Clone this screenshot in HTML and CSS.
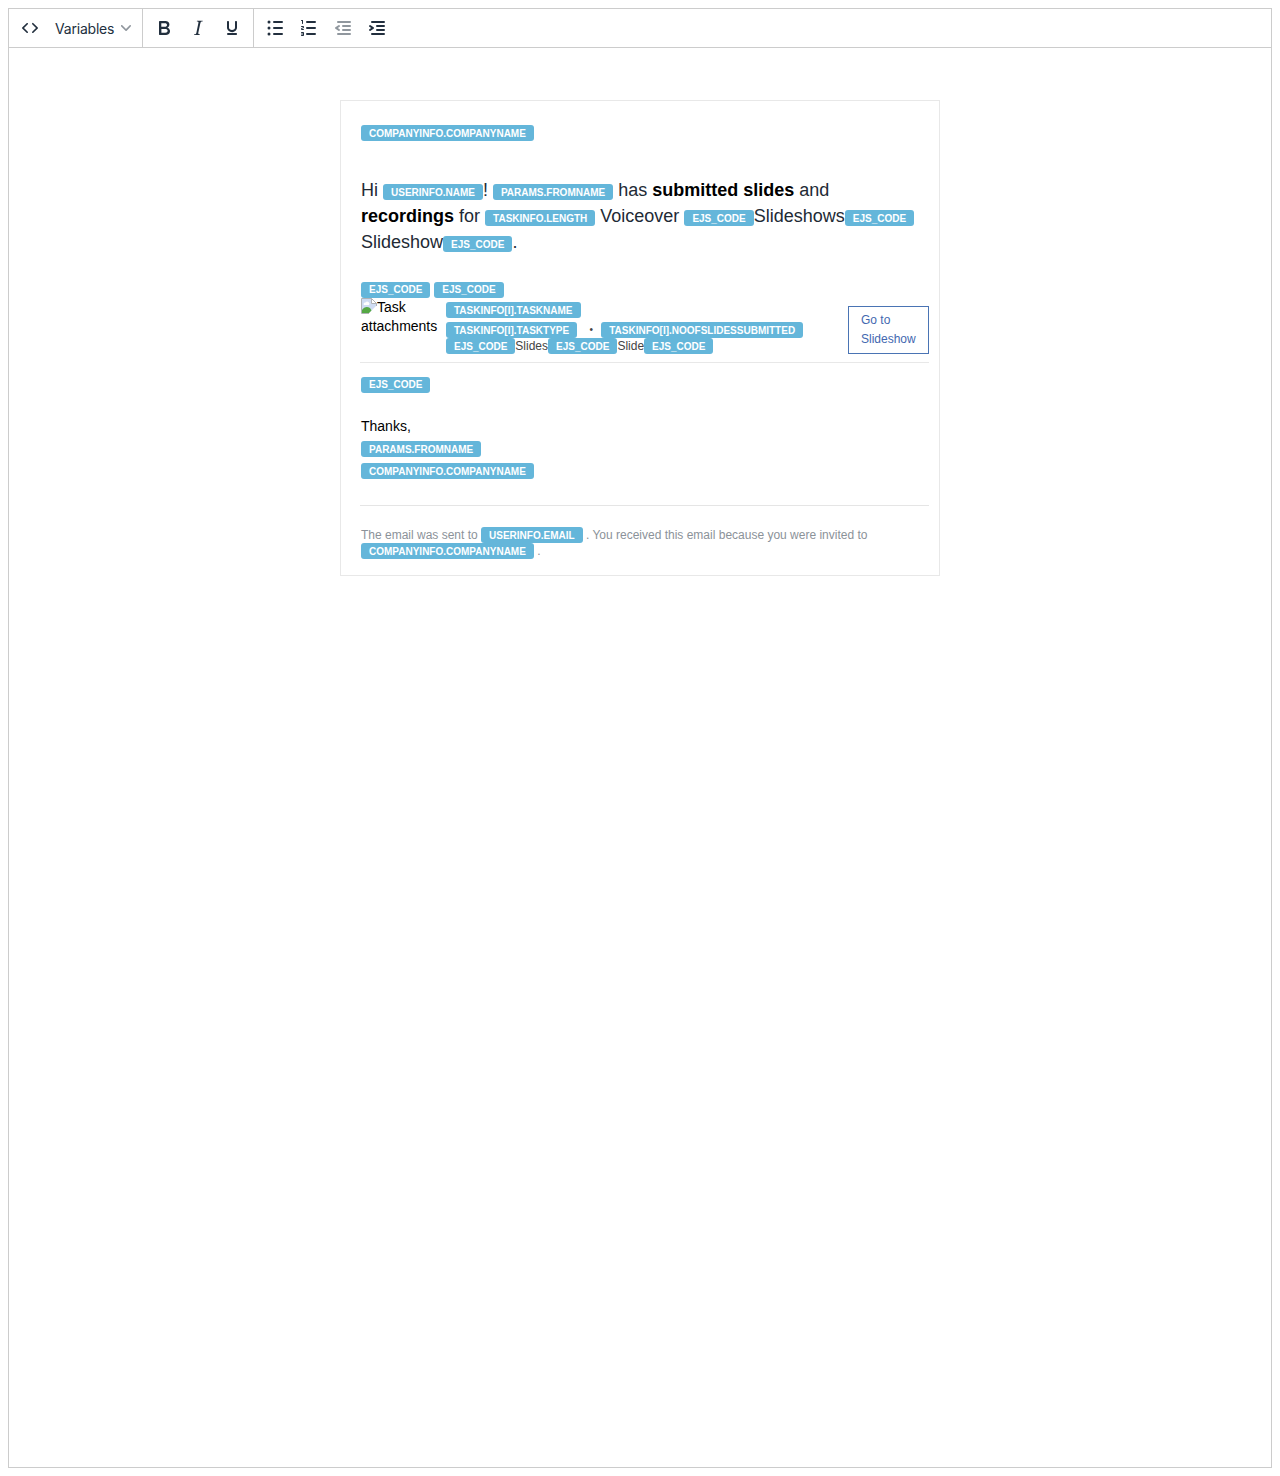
FILE: index.html
```html
<!DOCTYPE html>
<html lang="en">
<head>
<meta charset="utf-8">
<title>Email template editor</title>
<link rel="stylesheet" href="styles.css">
</head>
<body>
<div class="editor">
  <div class="toolbar">
    <div class="group">
      <button class="tool" aria-label="Source code"><svg width="24" height="24"><path d="M9.8 15.7c.3.3.3.8 0 1-.3.4-.9.4-1.2 0l-4.4-4.1a.8.8 0 0 1 0-1.2l4.4-4.2c.3-.3.9-.3 1.2 0 .3.3.3.8 0 1.1L6 12l3.8 3.7ZM14.2 15.7c-.3.3-.3.8 0 1 .4.4.9.4 1.2 0l4.4-4.1c.3-.3.3-.9 0-1.2l-4.4-4.2a.8.8 0 0 0-1.2 0c-.3.3-.3.8 0 1.1L18 12l-3.8 3.7Z"/></svg></button>
      <button class="select"><span class="select-label">Variables</span><svg class="chevron" width="10" height="10"><path d="M8.7 2.2c.3-.3.8-.3 1 0 .4.4.4.9 0 1.2L5.7 7.8c-.3.3-.9.3-1.2 0L.2 3.4a.8.8 0 0 1 0-1.2c.3-.3.8-.3 1.1 0L5 6l3.7-3.8Z"/></svg></button>
    </div>
    <div class="group">
      <button class="tool" aria-label="Bold"><svg width="24" height="24"><path d="M7.8 19c-.3 0-.5 0-.6-.2l-.2-.5V5.7c0-.2 0-.4.2-.5l.6-.2h5c1.5 0 2.7.3 3.5 1 .7.6 1.1 1.4 1.1 2.5a3 3 0 0 1-.6 1.9c-.4.6-1 1-1.6 1.2.4.1.9.3 1.3.6s.8.7 1 1.2c.4.4.5 1 .5 1.6 0 1.3-.4 2.3-1.3 3-.8.7-2.1 1-3.8 1H7.8Zm5-8.3c.6 0 1.2-.1 1.6-.5.4-.3.6-.7.6-1.3 0-1.1-.8-1.7-2.3-1.7H9.3v3.500h3.400Zm.5 6c.7 0 1.3-.1 1.7-.4.4-.4.6-.9.6-1.500s-.2-1-.7-1.400c-.4-.3-1-.4-2-.4H9.400v3.800h4Z" fill-rule="evenodd"/></svg></button>
      <button class="tool" aria-label="Italic"><svg width="24" height="24"><path d="m16.7 4.7-.1.9h-.3c-.6 0-1 0-1.4.3-.3.3-.4.6-.5 1.1l-2.1 9.8v.6c0 .5.4.8 1.4.8h.2l-.2.8H8l.2-.8h.2c1.1 0 1.8-.5 2-1.5l2-9.8.1-.5c0-.6-.4-.8-1.4-.8h-.3l.2-.9h5.7Z"/></svg></button>
      <button class="tool" aria-label="Underline"><svg width="24" height="24"><path d="M16 5c.6 0 1 .4 1 1v5.5a4 4 0 0 1-.4 1.8l-1 1.4a5.3 5.3 0 0 1-5.5 1 5 5 0 0 1-1.6-1c-.5-.4-.8-.9-1.1-1.4a4 4 0 0 1-.4-1.8V6c0-.6.4-1 1-1s1 .4 1 1v5.5c0 .3 0 .6.2 1l.6.7a3.3 3.3 0 0 0 2.2.8 3.4 3.4 0 0 0 2.2-.8c.3-.2.4-.5.6-.8l.2-.9V6c0-.6.4-1 1-1ZM8 17h8c.6 0 1 .4 1 1s-.4 1-1 1H8a1 1 0 0 1 0-2Z"/></svg></button>
    </div>
    <div class="group last">
      <button class="tool" aria-label="Bullet list"><svg width="24" height="24"><path d="M11 5h8a1 1 0 0 1 0 2h-8a1 1 0 0 1 0-2Zm0 6h8a1 1 0 0 1 0 2h-8a1 1 0 0 1 0-2Zm0 6h8a1 1 0 0 1 0 2h-8a1 1 0 0 1 0-2Z"/><circle cx="6" cy="6" r="1.5"/><circle cx="6" cy="12" r="1.5"/><circle cx="6" cy="18" r="1.5"/></svg></button>
      <button class="tool" aria-label="Numbered list"><svg width="24" height="24"><path d="M10 17h8a1 1 0 0 1 0 2h-8a1 1 0 0 1 0-2Zm0-6h8a1 1 0 0 1 0 2h-8a1 1 0 0 1 0-2Zm0-6h8a1 1 0 0 1 0 2h-8a1 1 0 1 1 0-2ZM6 4v3.5c0 .3-.2.5-.5.5a.5.5 0 0 1-.5-.5V5h-.5a.5.5 0 0 1 0-1H6Zm-1 8.8.2.2h1.3c.3 0 .5.2.5.5s-.2.5-.5.5H4.9a1 1 0 0 1-.9-1V13c0-.4.3-.8.6-1l1.2-.4.2-.3a.2.2 0 0 0-.2-.2H4.5a.5.5 0 0 1-.5-.5c0-.3.2-.5.5-.5h1.6c.5 0 .9.4.9 1v.1c0 .4-.3.8-.6 1l-1.2.4-.2.3ZM7 17v2c0 .6-.4 1-1 1H4.5a.5.5 0 0 1 0-1h1.2c.2 0 .3-.1.3-.3 0-.2-.1-.3-.3-.3H4.4a.4.4 0 1 1 0-.8h1.3c.2 0 .3-.1.3-.3 0-.2-.1-.3-.3-.3H4.5a.5.5 0 1 1 0-1H6c.6 0 1 .4 1 1Z"/></svg></button>
      <button class="tool disabled" aria-label="Decrease indent"><svg width="24" height="24"><path d="M7 5h12a1 1 0 0 1 0 2H7a1 1 0 1 1 0-2Zm5 4h7a1 1 0 0 1 0 2h-7a1 1 0 0 1 0-2Zm0 4h7a1 1 0 0 1 0 2h-7a1 1 0 0 1 0-2Zm-5 4h12a1 1 0 0 1 0 2H7a1 1 0 0 1 0-2Zm1.600-3.800a1 1 0 0 1-1.200 1.600l-3-2a1 1 0 0 1 0-1.600l3-2a1 1 0 0 1 1.200 1.600L6.800 12l1.800 1.200Z"/></svg></button>
      <button class="tool" aria-label="Increase indent"><svg width="24" height="24"><path d="M7 5h12a1 1 0 0 1 0 2H7a1 1 0 1 1 0-2Zm5 4h7a1 1 0 0 1 0 2h-7a1 1 0 0 1 0-2Zm0 4h7a1 1 0 0 1 0 2h-7a1 1 0 0 1 0-2Zm-5 4h12a1 1 0 0 1 0 2H7a1 1 0 0 1 0-2Zm-2.600-3.800L6.200 12l-1.800-1.200a1 1 0 0 1 1.200-1.600l3 2a1 1 0 0 1 0 1.600l-3 2a1 1 0 1 1-1.200-1.600Z"/></svg></button>
    </div>
  </div>
  <div class="canvas">
    <div class="email">
      <div class="brand"><span class="tag">CompanyInfo.companyName</span></div>
      <div class="message">
        <div>Hi <span class="tag">userInfo.name</span>! <span class="tag">params.fromName</span> has <b>submitted slides</b> and</div>
        <div><b>recordings</b> for <span class="tag">taskInfo.length</span> Voiceover <span class="tag">ejs_code</span>Slideshows<span class="tag">ejs_code</span></div>
        <div>Slideshow<span class="tag">ejs_code</span>.</div>
      </div>
      <div class="codes"><span class="tag">ejs_code</span><span class="tag">ejs_code</span></div>
      <div class="task">
        <div class="thumb"><svg class="broken" width="16" height="16" viewBox="0 0 16 16"><path d="M1 1h9.500l4.500 4.500V8l-7 7H1Z" fill="#cfdcf3"/><path d="M3 7a1.500 1.500 0 0 1 1.500-2.500 2 2 0 0 1 3.500 2.500Z" fill="#fff"/><path d="M1 15v-3c2-3 5-4 8-2l1.500 2.500L8 15Z" fill="#55a844"/><path d="M8 15.500H.5V.5h10l5 5V8" fill="none" stroke="#b0b3b7"/><path d="M10.500.5v5h5Z" fill="#fff" stroke="#b0b3b7"/></svg>Task<br>attachments</div>
        <div class="details">
          <div class="name"><span class="tag">taskInfo[i].taskName</span></div>
          <div class="row"><span class="tag">taskInfo[i].taskType</span><span class="dot">•</span><span class="tag">taskInfo[i].noOfSlidesSubmitted</span></div>
          <div class="row"><span class="tag">ejs_code</span>Slides<span class="tag">ejs_code</span>Slide<span class="tag">ejs_code</span></div>
        </div>
        <a class="go">Go to<br>Slideshow</a>
      </div>
      <div class="after"><span class="tag">ejs_code</span></div>
      <div class="thanks">Thanks,</div>
      <div class="signature"><span class="tag">params.fromName</span><span class="tag">companyInfo.companyName</span></div>
      <div class="footer">
        <div class="row">The email was sent to&nbsp;<span class="tag">userInfo.email</span>&nbsp;. You received this email because you were invited to</div>
        <div class="row"><span class="tag">companyInfo.companyName</span>&nbsp;.</div>
      </div>
    </div>
  </div>
</div>
</body>
</html>
```
FILE: styles.css
```css
* { box-sizing: border-box; }
body {
  margin: 0;
  padding: 8px;
  background: #fff;
  font-family: "Liberation Sans", Arial, sans-serif;
  font-size: 14px;
  color: #000;
}
.editor {
  display: flex;
  flex-direction: column;
  height: 1460px;
  border: 1px solid #ccc;
}
.toolbar {
  display: flex;
  height: 39px;
  border-bottom: 1px solid #ccc;
}
.group {
  display: flex;
  align-items: center;
  padding: 0 4px;
  border-right: 1px solid #ccc;
}
.group.last { border-right: 0; }
.tool, .select {
  display: flex;
  align-items: center;
  height: 34px;
  padding: 0;
  border: 0;
  background: none;
  color: #222f3e;
}
.tool { width: 34px; justify-content: center; }
.tool svg, .chevron { display: block; fill: #222f3e; }
.disabled svg { fill: rgba(34, 47, 62, .5); }
.select {
  width: 91px;
  padding: 0 7px 0 8px;
  justify-content: space-between;
  font: 14px/20px Inter, sans-serif;
}
.select-label { letter-spacing: -0.2px; padding-top: 2px; }
.chevron { opacity: .5; }
.canvas { padding-top: 52px; }
.email {
  width: 600px;
  height: 476px;
  margin: 0 auto;
  padding: 24px 10px 0 20px;
  border: 1px solid #e8e8e8;
}
.tag {
  display: inline-block;
  flex: none;
  height: 16px;
  padding: 0 8px;
  border-radius: 3px;
  background: #64b6da;
  color: #fff;
  font-size: 10px;
  font-weight: 700;
  line-height: 17px;
  text-transform: uppercase;
  white-space: nowrap;
}
.brand { display: flex; height: 52px; }
.message {
  font-size: 18px;
  line-height: 26px;
  color: #222a35;
  white-space: nowrap;
}
.message div { height: 26px; }
.message b { color: #000; }
.codes { display: flex; gap: 4px; padding-top: 27px; }
.codes .tag, .after .tag { line-height: 15px; }
.task {
  display: flex;
  height: 65px;
  margin-left: -1px;
  padding-left: 1px;
  border-bottom: 1px solid #e8e8e8;
}
.thumb { width: 85px; line-height: 19px; }
.broken { vertical-align: top; }
.details { flex: 1; padding-top: 4px; color: #444; font-size: 12px; }
.name { display: flex; height: 20px; }
.row { display: flex; height: 16px; line-height: 16px; white-space: nowrap; }
.dot { width: 24px; padding-left: 4px; text-align: center; font-size: 10px; }
.go {
  width: 81px;
  height: 48px;
  margin-top: 8px;
  padding: 4px 12px;
  border: 1px solid #4a74b4;
  color: #4368b0;
  font-size: 12px;
  line-height: 19px;
}
.after { display: flex; padding-top: 14px; }
.thanks { padding-top: 22px; line-height: 22px; }
.signature {
  display: flex;
  flex-direction: column;
  align-items: flex-start;
  gap: 6px;
  padding-top: 4px;
}
.footer {
  margin: 26px 0 0 -1px;
  padding: 21px 0 0 1px;
  border-top: 1px solid #e5e5e5;
  color: #8b9299;
  font-size: 12px;
}
```
